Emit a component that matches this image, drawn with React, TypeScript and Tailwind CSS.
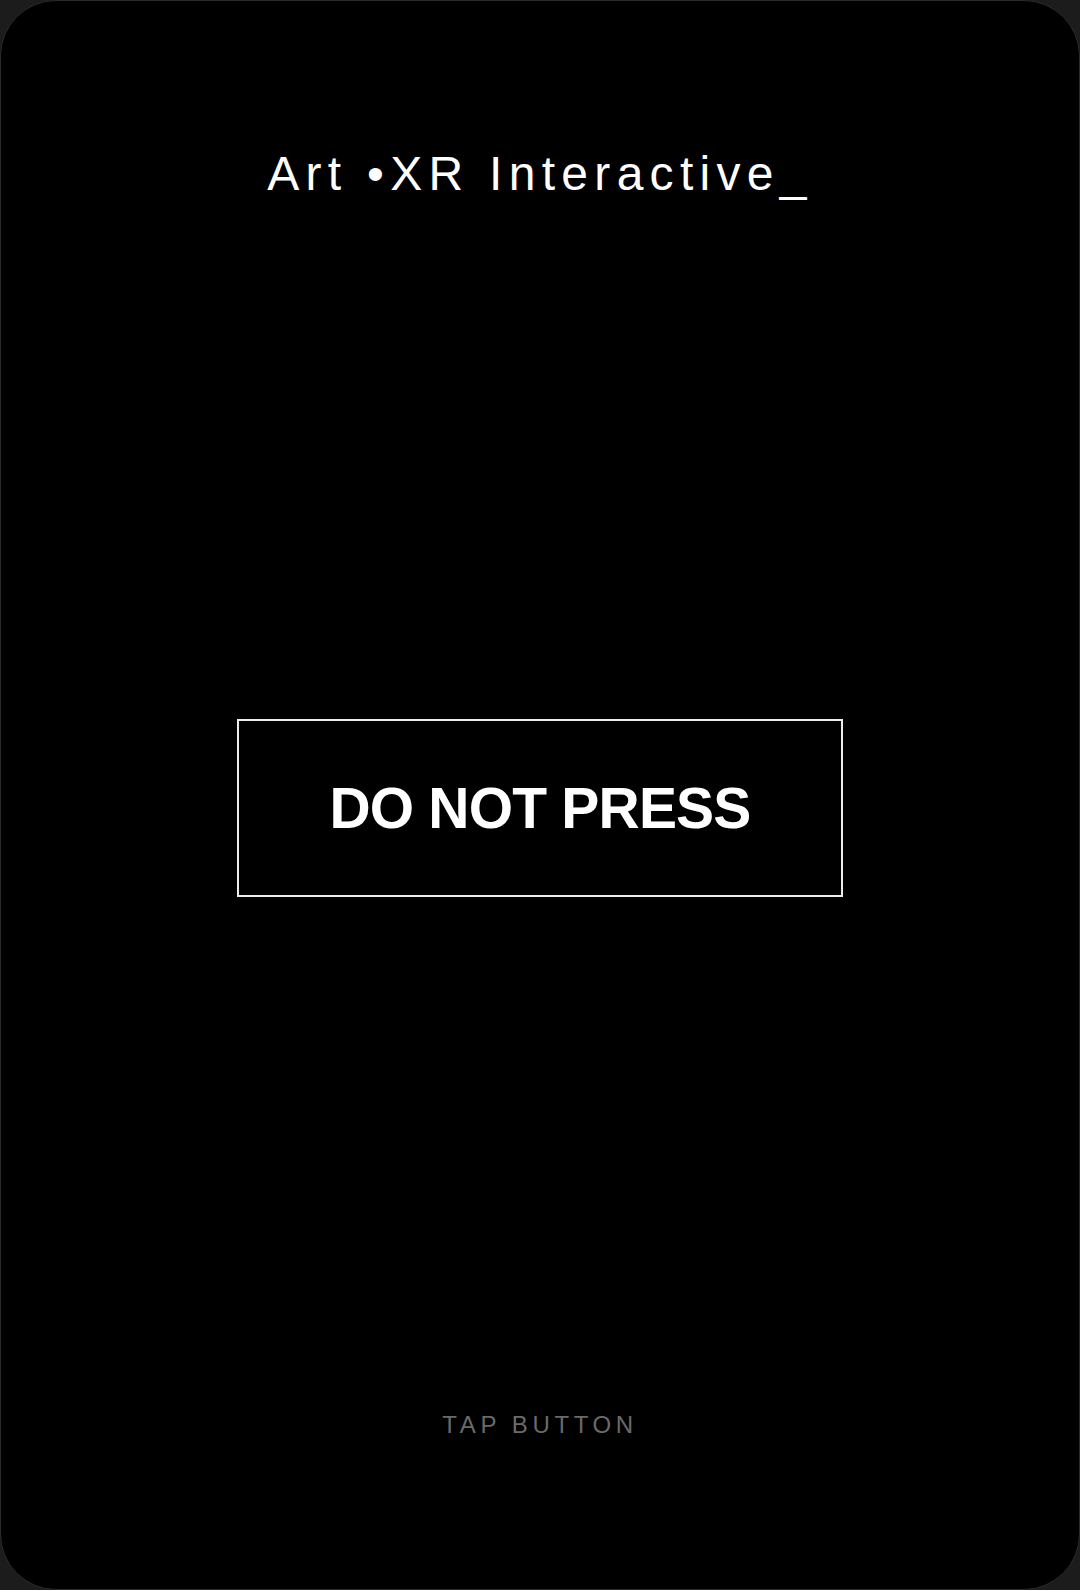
import React from "react";

export default function App() {
    return (
        <div className="h-[1590px] w-[1080px] bg-[#1c1c1c] font-['Liberation_Sans',Arial,sans-serif]">
            <div className="flex h-full w-full flex-col items-center rounded-[56px] border border-[#2b2b2b] bg-black">
                <h1 className="mt-[149px] text-[48px] font-normal leading-none tracking-[6.3px] text-white">
                    Art •XR Interactive_
                </h1>

                <button className="mt-[521px] flex h-[178px] w-[606px] items-center justify-center border-2 border-[#ececec] bg-black">
                    <span className="text-[57px] font-bold leading-none tracking-[-0.8px] text-white">DO NOT PRESS</span>
                </button>

                <p className="mt-[516px] text-[24px] leading-none tracking-[4.6px] text-[#6a6a6a]">
                    TAP BUTTON
                </p>
            </div>
        </div>
    );
}
